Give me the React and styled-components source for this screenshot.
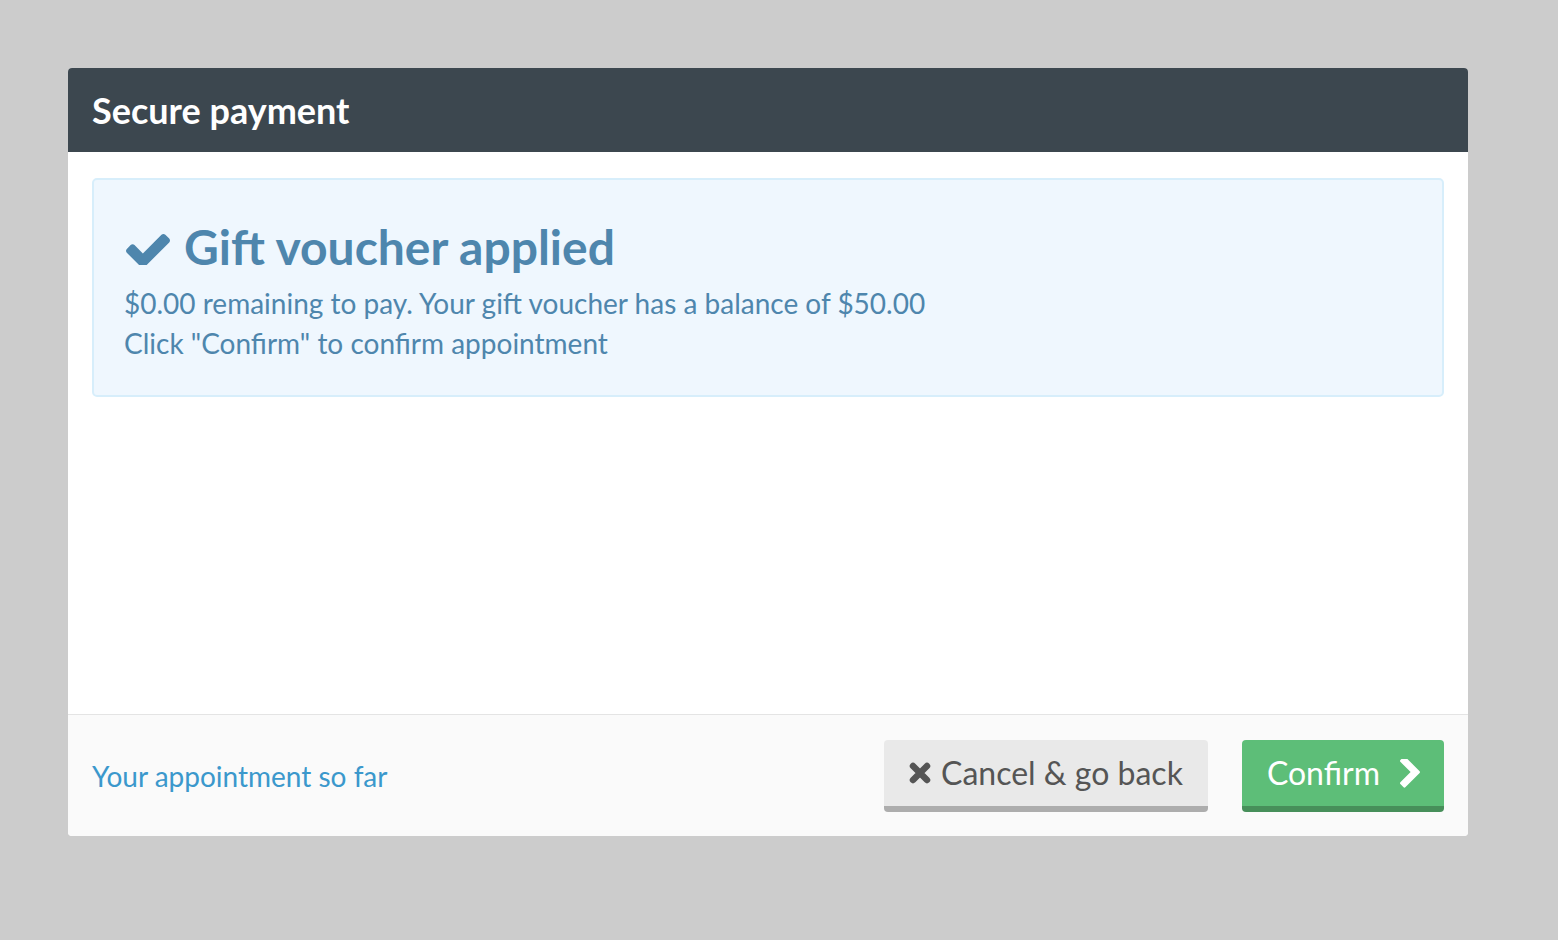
import React from "react";
import styled, { createGlobalStyle } from "styled-components";

const Global = createGlobalStyle`
  html, body { margin: 0; padding: 0; background: #cccccc; }
  body { font-family: Lato, "Open Sans", "Liberation Sans", sans-serif; }
  * { box-sizing: border-box; }
`;

const Page = styled.div`
  padding: 68px 90px 104px 68px;
  min-height: 940px;
`;

const Panel = styled.div`
  width: 1400px;
  background: #ffffff;
  border-radius: 4px;
  overflow: hidden;
  display: flex;
  flex-direction: column;
`;

const Header = styled.div`
  height: 84px;
  background: #3c474f;
  padding: 0 24px;
  display: flex;
  align-items: center;
`;

const Title = styled.h1`
  margin: 0;
  color: #ffffff;
  font-size: 36px;
  font-weight: 700;
`;

const Body = styled.div`
  height: 562px;
  padding: 26px 24px;
`;

const Alert = styled.div`
  background: #eff7fe;
  border: 2px solid #d7eefb;
  border-radius: 5px;
  padding: 40px 30px 32px 30px;
  color: #4e86ad;
`;

const AlertHeading = styled.h2`
  margin: 0 0 10px 2px;
  font-size: 48px;
  line-height: 53px;
  font-weight: 700;
  display: flex;
  align-items: center;
  gap: 14px;
`;

const Svg = styled.svg`
  display: block;
  flex: none;
  fill: currentColor;
`;

const CheckIcon = () => (
  <Svg viewBox="121 270 1550 1152" width="44" height="33" style={{ marginTop: 3 }}>
    <path d="M1671 566q0 40-28 68l-724 724-136 136q-28 28-68 28t-68-28l-136-136-362-362q-28-28-28-68t28-68l136-136q28-28 68-28t68 28l294 295 656-657q28-28 68-28t68 28l136 136q28 28 28 68z" />
  </Svg>
);

const XIcon = () => (
  <Svg viewBox="0 0 22 22" width="22" height="22">
    <path d="M4 4 L18 18 M18 4 L4 18" stroke="currentColor" strokeWidth="6.5" strokeLinecap="round" fill="none" />
  </Svg>
);

const ChevronIcon = () => (
  <Svg viewBox="346 173 1036 1465" width="20" height="29">
    <path d="M1363 877l-742 742q-19 19-45 19t-45-19l-166-166q-19-19-19-45t19-45l531-531-531-531q-19-19-19-45t19-45l166-166q19-19 45-19t45 19l742 742q19 19 19 45t-19 45z" />
  </Svg>
);

const Line = styled.p`
  margin: 0;
  font-size: 28px;
  line-height: 40px;
`;

const Footer = styled.div`
  border-top: 1px solid #e4e4e4;
  background: #fafafa;
  padding: 25px 24px 24px 24px;
  display: flex;
  align-items: center;
  justify-content: space-between;
`;

const Link = styled.a`
  color: #3b98cc;
  font-size: 28px;
  text-decoration: none;
  cursor: pointer;
`;

const Actions = styled.div`
  display: flex;
  gap: 34px;
`;

const Button = styled.button`
  font-family: inherit;
  height: 72px;
  border: none;
  border-bottom: 6px solid ${(p) => (p.$primary ? "#478f5a" : "#adadad")};
  border-radius: 4px;
  background: ${(p) => (p.$primary ? "#5dbe78" : "#e9e9e9")};
  color: ${(p) => (p.$primary ? "#ffffff" : "#555555")};
  font-size: 32px;
  line-height: 66px;
  padding: ${(p) => (p.$primary ? "0 24px 0 25px" : "0 25px 0 25px")};
  display: flex;
  align-items: center;
  gap: ${(p) => (p.$primary ? "20px" : "10px")};
  cursor: pointer;
`;

export default function App() {
  return (
    <>
      <Global />
      <Page>
        <Panel>
          <Header>
            <Title>Secure payment</Title>
          </Header>
          <Body>
            <Alert>
              <AlertHeading>
                <CheckIcon />
                Gift voucher applied
              </AlertHeading>
              <Line>$0.00 remaining to pay. Your gift voucher has a balance of $50.00</Line>
              <Line>Click "Confirm" to confirm appointment</Line>
            </Alert>
          </Body>
          <Footer>
            <Link>Your appointment so far</Link>
            <Actions>
              <Button>
                <XIcon />
                Cancel &amp; go back
              </Button>
              <Button $primary>
                Confirm
                <ChevronIcon />
              </Button>
            </Actions>
          </Footer>
        </Panel>
      </Page>
    </>
  );
}
